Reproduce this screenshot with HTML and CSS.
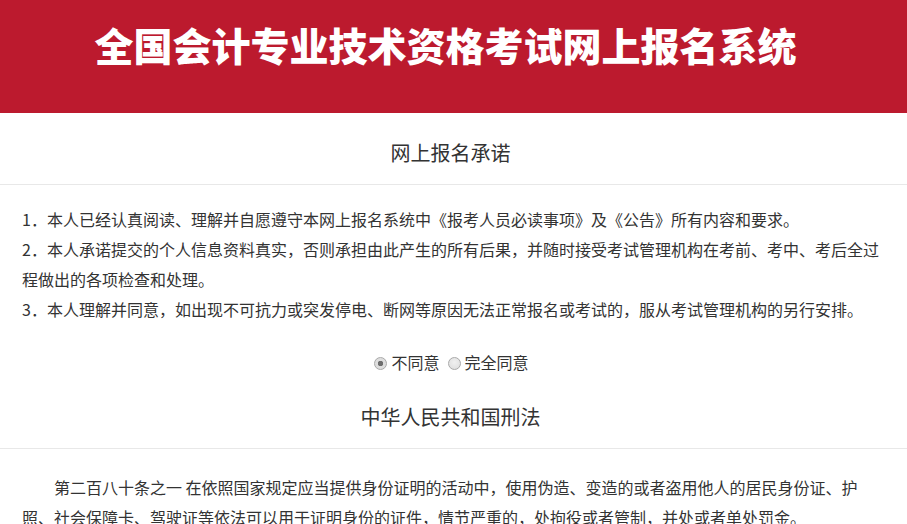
FILE: index.html
```html
<!DOCTYPE html>
<html lang="zh-CN">
<head>
<meta charset="utf-8">
<title>全国会计专业技术资格考试网上报名系统</title>
<link rel="stylesheet" href="styles.css">
</head>
<body>
<header class="banner">
  <h1 class="banner-title">全国会计专业技术资格考试网上报名系统</h1>
</header>
<main class="page">
  <h2 class="section-title">网上报名承诺</h2>
  <div class="promise">
    <p>1．本人已经认真阅读、理解并自愿遵守本网上报名系统中《报考人员必读事项》及《公告》所有内容和要求。</p>
    <p>2．本人承诺提交的个人信息资料真实，否则承担由此产生的所有后果，并随时接受考试管理机构在考前、考中、考后全过程做出的各项检查和处理。</p>
    <p>3．本人理解并同意，如出现不可抗力或突发停电、断网等原因无法正常报名或考试的，服从考试管理机构的另行安排。</p>
  </div>
  <div class="choice">
    <label class="opt"><input type="radio" name="agree" checked disabled><span>不同意</span></label>
    <label class="opt"><input type="radio" name="agree" disabled><span>完全同意</span></label>
  </div>
  <h2 class="section-title">中华人民共和国刑法</h2>
  <div class="law">
    <p>第二百八十条之一 在依照国家规定应当提供身份证明的活动中，使用伪造、变造的或者盗用他人的居民身份证、护照、社会保障卡、驾驶证等依法可以用于证明身份的证件，情节严重的，处拘役或者管制，并处或者单处罚金。</p>
  </div>
</main>
</body>
</html>
```

FILE: styles.css
```css
html, body {
  margin: 0;
  padding: 0;
  background: #ffffff;
}
body {
  font-family: "Noto Sans CJK SC", "Noto Sans", sans-serif;
  color: #333333;
  font-size: 16px;
}
.banner {
  background: #bc1a2e;
  height: 113px;
  display: flex;
  align-items: center;
  justify-content: center;
  padding-right: 16px;
}
.banner-title {
  margin: 0 0 26px 0;
  color: #ffffff;
  font-size: 39px;
  font-weight: 900;
  line-height: 48px;
  letter-spacing: 0;
}
.page {
  padding: 0;
}
.section-title {
  margin: 0;
  font-size: 20px;
  font-weight: normal;
  text-align: center;
  line-height: 28px;
  padding: 26px 6px 17px 0;
  border-bottom: 1px solid #e8e8e8;
  color: #333333;
}
.promise {
  padding: 19px 22px 0;
}
.promise p,
.law p {
  margin: 0;
  line-height: 30px;
}
.choice {
  display: flex;
  justify-content: center;
  gap: 8px;
  margin-top: 23px;
  padding-right: 4px;
  line-height: 30px;
}
.opt {
  display: flex;
  align-items: center;
}
.opt input {
  appearance: none;
  -webkit-appearance: none;
  margin: 2px 4px 0 0;
  width: 13px;
  height: 13px;
  border-radius: 50%;
  border: 1px solid #a9a9a9;
  background: radial-gradient(circle at 50% 40%, #f0f0f0 0%, #dcdcdc 100%);
  box-sizing: border-box;
  position: relative;
}
.opt input:checked {
  background: radial-gradient(circle, #6e6e6e 0 2.5px, #dedede 3px 100%);
}
.law {
  padding: 23px 22px 0;
}
.law p {
  text-indent: 2em;
}
```
